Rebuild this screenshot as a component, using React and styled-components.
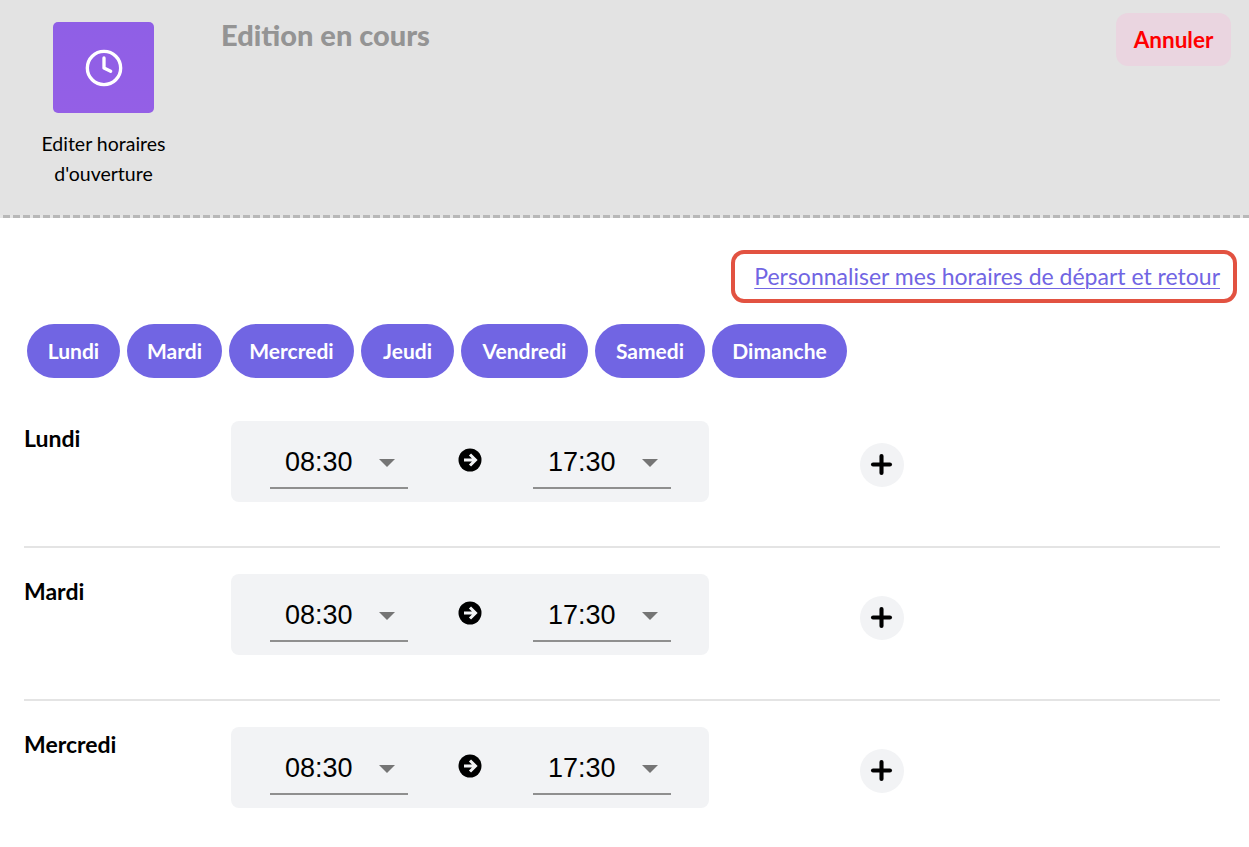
import React from 'react';
import styled, { createGlobalStyle } from 'styled-components';
import { Clock, Plus } from 'lucide-react';

const GlobalStyle = createGlobalStyle`
  html, body {
    margin: 0;
    padding: 0;
    background: #fff;
    font-family: Lato, "Open Sans", sans-serif;
    color: #000;
  }
`;

const Page = styled.div`
  width: 1249px;
  height: 847px;
  overflow: hidden;
`;

const Header = styled.header`
  display: flex;
  box-sizing: border-box;
  height: 218px;
  background:
    repeating-linear-gradient(90deg, #e6e6e6 0 3px, #b8b8b8 3px 10px) bottom / 100% 3px no-repeat,
    #e3e3e3;
`;
const ActionColumn = styled.div`
  width: 207px;
  padding-top: 22px;
  display: flex;
  flex-direction: column;
  align-items: center;
`;
const ActionTile = styled.div`
  width: 101px;
  height: 91px;
  border-radius: 5px;
  background: linear-gradient(180deg, #8f5fe6 0%, #945fe6 100%);
  display: flex;
  align-items: center;
  justify-content: center;
  color: #fff;
`;
const ActionLabel = styled.div`
  margin-top: 16px;
  font-size: 19.5px;
  line-height: 30px;
  text-align: center;
`;
const Title = styled.h1`
  flex: 1;
  margin: 17px 0 0 14px;
  font-size: 29px;
  line-height: 36px;
  font-weight: 900;
  color: #949494;
`;
const CancelButton = styled.button`
  align-self: flex-start;
  width: 115px;
  height: 53px;
  margin: 13px 18px 0 0;
  padding: 0;
  border: 0;
  border-radius: 12px;
  background: #ead5e0;
  color: #ff0000;
  font-family: inherit;
  font-size: 22.5px;
  font-weight: 700;
`;

const LinkRow = styled.div`
  display: flex;
  justify-content: flex-end;
  padding: 32px 12px 0 0;
`;
const LinkFrame = styled.div`
  box-sizing: border-box;
  width: 506px;
  height: 53px;
  padding: 0 13px 2px 0;
  border: 4px solid #e25241;
  border-radius: 13px;
  display: flex;
  align-items: center;
  justify-content: flex-end;
`;
const CustomLink = styled.a`
  color: #7165e3;
  font-size: 23px;
  text-decoration: underline;
  text-decoration-thickness: 1px;
  text-underline-offset: 3px;
`;

const DayPills = styled.div`
  display: flex;
  gap: 7px;
  padding: 21px 0 0 27px;
`;
const DayPill = styled.div`
  box-sizing: border-box;
  width: ${props => props.$width}px;
  height: 54px;
  padding-bottom: 2px;
  border-radius: 27px;
  background: #7165e3;
  color: #fff;
  font-size: 21px;
  font-weight: 700;
  display: flex;
  align-items: center;
  justify-content: center;
`;

const Schedule = styled.div`
  padding: 43px 29px 0 24px;
`;
const DayRow = styled.div`
  display: flex;
  align-items: flex-start;
  height: 125px;
  border-bottom: ${props => (props.$last ? '0' : '2px solid #e4e4e4')};
  margin-bottom: 26px;
`;
const DayName = styled.div`
  width: 207px;
  margin-top: 3px;
  font-size: 23px;
  line-height: 28px;
  font-weight: 700;
`;
const HoursPanel = styled.div`
  width: 478px;
  height: 81px;
  box-sizing: border-box;
  padding: 0 38px 0 39px;
  background: #f2f3f5;
  border-radius: 8px;
  display: flex;
  justify-content: space-between;
`;
const TimeSelect = styled.div`
  box-sizing: border-box;
  width: 138px;
  height: 68px;
  padding: 17px 13px 0 15px;
  border-bottom: 2px solid #8f8f8f;
  display: flex;
  align-items: center;
  justify-content: space-between;
  font-family: "Liberation Sans", Arial, sans-serif;
  font-size: 27px;
`;
const Caret = styled.span`
  width: 0;
  height: 0;
  border-left: 8px solid transparent;
  border-right: 8px solid transparent;
  border-top: 8px solid #757575;
`;
const ArrowIcon = styled.svg`
  width: 24px;
  height: 24px;
  margin: 27px 2px 0 0;
`;
const AddButton = styled.button`
  width: 44px;
  height: 44px;
  margin: 22px 0 0 151px;
  padding: 0 2px 2px 0;
  border: 0;
  border-radius: 50%;
  background: #f2f3f5;
  color: #000;
  display: flex;
  align-items: center;
  justify-content: center;
`;

const pills = [
  ['Lundi', 93],
  ['Mardi', 95],
  ['Mercredi', 125],
  ['Jeudi', 93],
  ['Vendredi', 127],
  ['Samedi', 110],
  ['Dimanche', 135],
];

const App = () => (
  <Page>
    <GlobalStyle />
    <Header>
      <ActionColumn>
        <ActionTile>
          <Clock size={40} strokeWidth={2} />
        </ActionTile>
        <ActionLabel>
          Editer horaires<br />
          d'ouverture
        </ActionLabel>
      </ActionColumn>
      <Title>Edition en cours</Title>
      <CancelButton>Annuler</CancelButton>
    </Header>
    <LinkRow>
      <LinkFrame>
        <CustomLink href="#">Personnaliser mes horaires de départ et retour</CustomLink>
      </LinkFrame>
    </LinkRow>
    <DayPills>
      {pills.map(([day, width]) => (
        <DayPill key={day} $width={width}>{day}</DayPill>
      ))}
    </DayPills>
    <Schedule>
      {['Lundi', 'Mardi', 'Mercredi'].map((day, i) => (
        <DayRow key={day} $last={i === 2}>
          <DayName>{day}</DayName>
          <HoursPanel>
            <TimeSelect>08:30<Caret /></TimeSelect>
            <ArrowIcon viewBox="0 0 24 24">
              <circle cx="12" cy="12" r="11.5" fill="#000" />
              <path d="M6 12h11M12 6.5l5.5 5.5-5.5 5.5" fill="none" stroke="#f2f3f5" strokeWidth="3" />
            </ArrowIcon>
            <TimeSelect>17:30<Caret /></TimeSelect>
          </HoursPanel>
          <AddButton>
            <Plus size={29} strokeWidth={3.4} />
          </AddButton>
        </DayRow>
      ))}
    </Schedule>
  </Page>
);

export default App;
